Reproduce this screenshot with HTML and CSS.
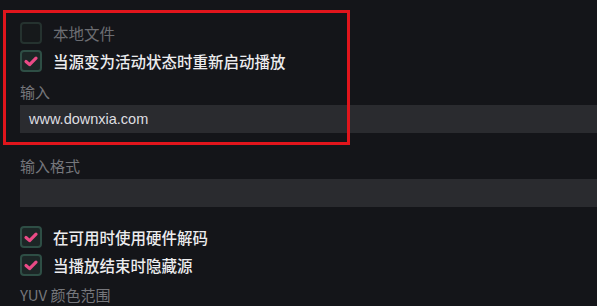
FILE: index.html
```html
<!DOCTYPE html>
<html lang="zh-CN">
<head>
  <meta charset="UTF-8">
  <title>媒体源属性</title>
  <link rel="stylesheet" href="styles.css">
</head>
<body>
  <div class="panel">
    <label class="check-row">
      <span class="check"></span>
      <span class="check-text dim">本地文件</span>
    </label>
    <label class="check-row">
      <span class="check on"><svg viewBox="0 0 18 18"><path d="M4 9.5 L7.6 12.6 L14 6.2" /></svg></span>
      <span class="check-text">当源变为活动状态时重新启动播放</span>
    </label>

    <div class="field-label first">输入</div>
    <div class="text-field">www.downxia.com</div>

    <div class="field-label second">输入格式</div>
    <div class="text-field"></div>

    <div class="checks-lower">
      <label class="check-row">
        <span class="check on"><svg viewBox="0 0 18 18"><path d="M4 9.5 L7.6 12.6 L14 6.2" /></svg></span>
        <span class="check-text">在可用时使用硬件解码</span>
      </label>
      <label class="check-row">
        <span class="check on"><svg viewBox="0 0 18 18"><path d="M4 9.5 L7.6 12.6 L14 6.2" /></svg></span>
        <span class="check-text">当播放结束时隐藏源</span>
      </label>
    </div>

    <div class="field-label last">YUV 颜色范围</div>

    <div class="highlight"></div>
  </div>
</body>
</html>
```

FILE: styles.css
```css
body {
  margin: 0;
  background-color: #141519;
  font-family: "Noto Sans CJK SC", "Liberation Sans", sans-serif;
  color: #e6e6e8;
  overflow: hidden;
}

.panel {
  position: relative;
  padding: 19px 0 0 20px;
  height: 306px;
  box-sizing: border-box;
}

.check-row {
  display: flex;
  align-items: center;
  height: 28px;
  gap: 11px;
}

.check {
  width: 22px;
  height: 22px;
  box-sizing: border-box;
  border: 2px solid #25322f;
  border-radius: 4px;
  background: #16191b;
  flex-shrink: 0;
}

.check.on {
  border-color: #2e4e45;
  background: #1c2626;
}

.check svg {
  display: block;
  width: 18px;
  height: 18px;
}

.check svg path {
  fill: none;
  stroke: #ea4a86;
  stroke-width: 3.2;
  stroke-linecap: round;
  stroke-linejoin: round;
}

.check-text {
  font-size: 15.5px;
  font-weight: 500;
  line-height: 20px;
  color: #ececee;
}

.check-text.dim {
  font-weight: 400;
  color: #6c6d72;
}

.field-label {
  font-size: 15px;
  line-height: 20px;
  color: #76777c;
}

.field-label.first {
  margin-top: 7px;
}

.field-label.second {
  margin-top: 23px;
}

.field-label.last {
  margin-top: 6px;
}

.text-field {
  margin-top: 3px;
  height: 28px;
  background: #2a2b2f;
  padding-left: 9px;
  font-family: "Liberation Sans", sans-serif;
  font-size: 14.5px;
  line-height: 28px;
  color: #dedee0;
}

.checks-lower {
  margin-top: 16px;
}

.highlight {
  position: absolute;
  left: 3px;
  top: 10px;
  width: 347px;
  height: 135px;
  box-sizing: border-box;
  border: 3px solid #e0151c;
}
```
